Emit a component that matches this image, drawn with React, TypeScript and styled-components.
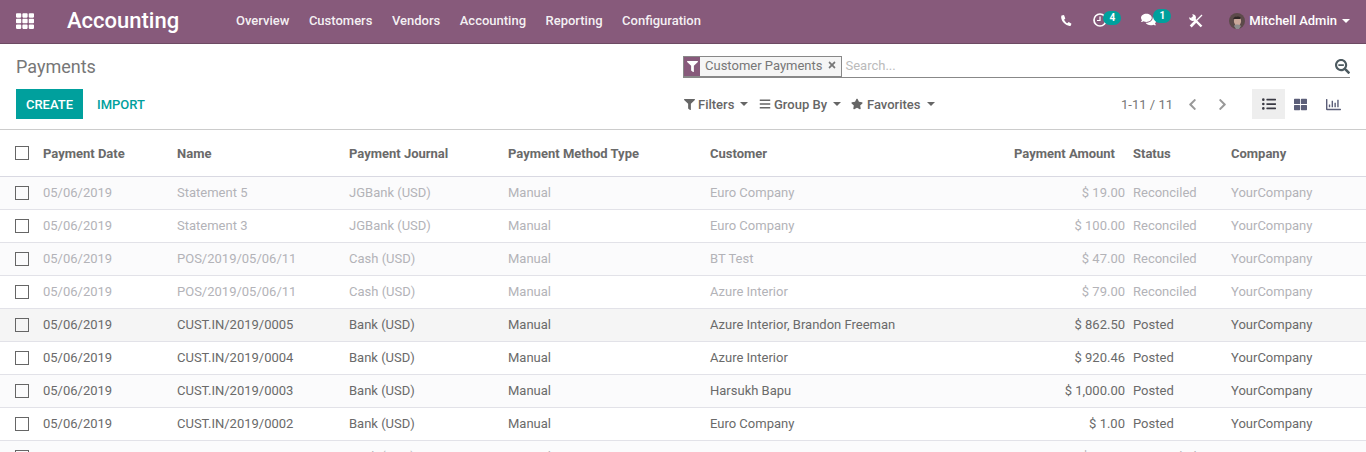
import React from 'react';
import styled, { createGlobalStyle } from 'styled-components';
import {
  FaBars,
  FaChevronLeft,
  FaChevronRight,
  FaComments,
  FaFilter,
  FaListUl,
  FaRegChartBar,
  FaSearchMinus,
  FaStar,
  FaThLarge,
  FaTimes,
  FaTh,
} from 'react-icons/fa';

const GlobalStyle = createGlobalStyle`
  html, body {
    margin: 0;
    height: 100%;
    overflow: hidden;
    background: #fff;
    font-family: Roboto, "Liberation Sans", sans-serif;
    font-size: 13px;
    color: #666;
  }
`;

const Page = styled.div`
  height: 452px;
  overflow: hidden;
`;

// Top navbar
const Navbar = styled.header`
  display: flex;
  align-items: center;
  height: 44px;
  box-sizing: border-box;
  padding-bottom: 2px;
  background: #875a7b;
  border-bottom: 1px solid #6d4a63;
  color: #fff;
`;

const AppsButton = styled.div`
  display: flex;
  width: 50px;
  padding-left: 16px;
  box-sizing: border-box;
  font-size: 18px;
`;

const Brand = styled.div`
  width: 186px;
  padding-left: 17px;
  box-sizing: border-box;
  font-size: 22px;
  font-weight: 500;
`;

const Menu = styled.nav`
  display: flex;
  gap: 19.5px;
  font-size: 13px;
  font-weight: 500;
  color: rgba(255, 255, 255, 0.93);
`;

const Systray = styled.div`
  display: flex;
  align-items: center;
  margin-left: auto;
  padding-right: 16px;
`;

const TrayItem = styled.div<{ $width: number }>`
  position: relative;
  display: flex;
  align-items: center;
  width: ${(p) => p.$width}px;
  font-size: 15px;
`;

const Badge = styled.span<{ $left: number; $top: number }>`
  position: absolute;
  top: ${(p) => p.$top}px;
  left: ${(p) => p.$left}px;
  width: 18px;
  height: 14px;
  line-height: 14px;
  border-radius: 7px;
  background: #00a09d;
  color: #fff;
  font-size: 10px;
  font-weight: 700;
  text-align: center;
`;

const TrayIcon = styled.svg<{ $lift?: number }>`
  display: block;
  width: 14px;
  height: 14px;
  margin-top: ${(p) => (p.$lift ? p.$lift * -1 : 0)}px;
`;

const ChatIcon = styled(FaComments)`
  margin-top: -2px;
`;

const UserName = styled.span`
  display: flex;
  align-items: center;
  font-size: 13px;
  font-weight: 500;
`;

const Avatar = styled.svg`
  width: 16px;
  height: 16px;
  margin-right: 4px;
`;

const Caret = styled.span<{ $gap: number }>`
  display: inline-block;
  width: 0;
  height: 0;
  margin-left: ${(p) => p.$gap}px;
  border-top: 4px solid currentColor;
  border-left: 4px solid transparent;
  border-right: 4px solid transparent;
`;

// Control panel
const ControlPanel = styled.section`
  display: grid;
  grid-template-columns: 667px 1fr;
  height: 85px;
  padding: 0 16px;
  border-bottom: 1px solid #ccc;
`;

const LeftPanel = styled.div`
  display: flex;
  flex-direction: column;
`;

const Title = styled.h1`
  margin: 12px 0 0;
  height: 33px;
  font-size: 18px;
  font-weight: 400;
  line-height: 22px;
  color: #777;
`;

const Buttons = styled.div`
  display: flex;
  align-items: center;
  gap: 4px;
`;

const CreateButton = styled.button`
  width: 67px;
  height: 30px;
  padding: 0;
  border: 0;
  background: #00a09d;
  color: #fff;
  font: 500 13px Roboto, sans-serif;
`;

const ImportButton = styled.button`
  width: 68px;
  height: 30px;
  padding: 0;
  border: 0;
  background: none;
  color: #00a09d;
  font: 500 13px Roboto, sans-serif;
`;

const RightPanel = styled.div`
  display: flex;
  flex-direction: column;
`;

const SearchBar = styled.div`
  display: flex;
  align-items: center;
  height: 23px;
  margin-top: 11px;
  box-sizing: border-box;
  border-bottom: 1px solid #888;
`;

const Facet = styled.div`
  display: flex;
  align-items: stretch;
  height: 21px;
  box-sizing: border-box;
  border: 1px solid #888;
  background: #f5f5f5;
`;

const FacetIcon = styled.span`
  display: flex;
  align-items: center;
  justify-content: center;
  width: 16px;
  background: #875a7b;
  color: #fff;
  font-size: 11px;
`;

const FacetLabel = styled.span`
  display: flex;
  align-items: center;
  gap: 4px;
  padding: 0 4px 2px 5px;
  color: #777;
  font-size: 13px;
`;

const Placeholder = styled.span`
  flex: 1;
  margin-left: 4px;
  padding-bottom: 2px;
  color: #bbb;
  font-size: 13px;
`;

const SearchIcon = styled(FaSearchMinus)`
  font-size: 15px;
  color: #4c5a60;
`;

const Tools = styled.div`
  display: flex;
  align-items: center;
  height: 30px;
  margin-top: 11px;
  padding-left: 1px;
`;

const Dropdown = styled.div<{ $width: number; $gap?: number }>`
  display: flex;
  align-items: center;
  width: ${(p) => p.$width}px;
  gap: ${(p) => p.$gap ?? 3}px;
  font-size: 13px;
  font-weight: 500;
  color: #666;
`;

const Pager = styled.div`
  display: flex;
  align-items: center;
  margin-left: auto;
  margin-right: -1px;
  color: #777;
  font-size: 13px;
`;

const PagerArrows = styled.div`
  display: flex;
  gap: 17px;
  margin: 0 23px 0 13px;
  color: #999;
  font-size: 13px;
`;

const SwitchButton = styled.div<{ $active?: boolean; $size: number; $nudge?: number }>`
  display: flex;
  align-items: center;
  justify-content: center;
  box-sizing: border-box;
  width: 33px;
  height: 30px;
  padding-right: ${(p) => p.$nudge ?? 0}px;
  font-size: ${(p) => p.$size}px;
  color: ${(p) => (p.$active ? '#3a3a44' : '#5b5e78')};
  background: ${(p) => (p.$active ? '#eeeeee' : 'transparent')};
`;

// Table
const Row = styled.div<{ $head?: boolean; $bg?: string; $faded?: boolean }>`
  position: relative;
  display: grid;
  grid-template-columns: 43px 134px 172px 159px 202px 200px 223px 98px 1fr;
  align-items: center;
  box-sizing: border-box;
  height: ${(p) => (p.$head ? '47px' : '33px')};
  border-bottom: 1px solid ${(p) => (p.$head ? '#d9d9e2' : '#e2e2e8')};
  background: ${(p) => p.$bg || '#fff'};
  box-shadow: ${(p) => (p.$head ? '0 3px 6px -2px rgba(0, 0, 0, 0.08)' : 'none')};
  color: ${(p) => (p.$faded ? '#b3b3b8' : '#6a6a6a')};
  font-weight: ${(p) => (p.$head ? 700 : 400)};
  font-size: 13px;

  & > span:not(:first-child) {
    padding-bottom: ${(p) => (p.$head ? 0 : 2)}px;
  }
`;

const Check = styled.span`
  display: block;
  width: 14px;
  height: 14px;
  box-sizing: border-box;
  margin-left: 15px;
  border: 1px solid #666;
`;

const Cell = styled.span`
  white-space: nowrap;
`;

const AmountCell = styled.span<{ $sortGap?: boolean }>`
  white-space: nowrap;
  text-align: right;
  padding-right: ${(p) => (p.$sortGap ? 18 : 8)}px;
`;

const rows = [
  ['05/06/2019', 'Statement 5', 'JGBank (USD)', 'Euro Company', '$ 19.00', 'Reconciled'],
  ['05/06/2019', 'Statement 3', 'JGBank (USD)', 'Euro Company', '$ 100.00', 'Reconciled'],
  ['05/06/2019', 'POS/2019/05/06/11', 'Cash (USD)', 'BT Test', '$ 47.00', 'Reconciled'],
  ['05/06/2019', 'POS/2019/05/06/11', 'Cash (USD)', 'Azure Interior', '$ 79.00', 'Reconciled'],
  ['05/06/2019', 'CUST.IN/2019/0005', 'Bank (USD)', 'Azure Interior, Brandon Freeman', '$ 862.50', 'Posted'],
  ['05/06/2019', 'CUST.IN/2019/0004', 'Bank (USD)', 'Azure Interior', '$ 920.46', 'Posted'],
  ['05/06/2019', 'CUST.IN/2019/0003', 'Bank (USD)', 'Harsukh Bapu', '$ 1,000.00', 'Posted'],
  ['05/06/2019', 'CUST.IN/2019/0002', 'Bank (USD)', 'Euro Company', '$ 1.00', 'Posted'],
  ['05/06/2019', 'CUST.IN/2019/0001', 'Bank (USD)', 'Euro Company', '$ 50.00', 'Reconciled'],
];

const rowBackground = (i: number) => {
  if (i === 4) return '#f5f5f5';
  return i % 2 === 0 ? '#fbfbfc' : '#fff';
};

const App: React.FC = () => (
  <Page>
    <GlobalStyle />
    <Navbar>
      <AppsButton>
        <FaTh />
      </AppsButton>
      <Brand>Accounting</Brand>
      <Menu>
        {['Overview', 'Customers', 'Vendors', 'Accounting', 'Reporting', 'Configuration'].map((m) => (
          <span key={m}>{m}</span>
        ))}
      </Menu>
      <Systray>
        <TrayItem $width={34}>
          <TrayIcon viewBox="0 0 14 14">
            <path d="M2.5 1.5c-1 1.5 0 5 2.2 7.3s5 3.6 7 2.9l.8-2-2.8-1.6-1.4 1.2c-1.4-.8-2.5-2-3.2-3.6l1.2-1.3L5 1z" fill="#fff" />
          </TrayIcon>
        </TrayItem>
        <TrayItem $width={48}>
          <TrayIcon viewBox="0 0 14 14" $lift={2}>
            <circle cx="7" cy="7" r="6" fill="none" stroke="#fff" strokeWidth="1.7" />
            <path d="M7 3.5V7.5H4" fill="none" stroke="#fff" strokeWidth="1.2" />
          </TrayIcon>
          <Badge $left={10} $top={-4}>4</Badge>
        </TrayItem>
        <TrayItem $width={48}>
          <ChatIcon />
          <Badge $left={12} $top={-5}>1</Badge>
        </TrayItem>
        <TrayItem $width={40}>
          <TrayIcon viewBox="0 0 14 14">
            <path d="M3 3l9.5 9.5" stroke="#fff" strokeWidth="2.4" />
            <path d="M3.2 0.2A3.4 3.4 0 1 1 .2 3.2l2.4 1 1.6-1.6z" fill="#fff" />
            <path d="M7.5 6.5l5.5-5.5" stroke="#fff" strokeWidth="1.3" />
            <path d="M7.5 6.5l-5.8 6" stroke="#fff" strokeWidth="2.6" />
          </TrayIcon>
        </TrayItem>
        <UserName>
          <Avatar viewBox="0 0 16 16">
            <circle cx="8" cy="8" r="8" fill="#5c4a4a" />
            <ellipse cx="8.5" cy="8" rx="3.6" ry="4.6" fill="#c9a79a" />
            <path d="M4 6c1-3 6-4 8-1l-1 1H6z" fill="#2f2626" />
            <path d="M5 13c1-2 5-2 7 0l-2 3H7z" fill="#8d8d8d" />
          </Avatar>
          Mitchell Admin
          <Caret $gap={5} />
        </UserName>
      </Systray>
    </Navbar>

    <ControlPanel>
      <LeftPanel>
        <Title>Payments</Title>
        <Buttons>
          <CreateButton>CREATE</CreateButton>
          <ImportButton>IMPORT</ImportButton>
        </Buttons>
      </LeftPanel>
      <RightPanel>
        <SearchBar>
          <Facet>
            <FacetIcon>
              <FaFilter />
            </FacetIcon>
            <FacetLabel>
              Customer Payments
              <FaTimes size={10} />
            </FacetLabel>
          </Facet>
          <Placeholder>Search...</Placeholder>
          <SearchIcon />
        </SearchBar>
        <Tools>
          <Dropdown $width={75}>
            <FaFilter size={11} /> Filters <Caret $gap={3} />
          </Dropdown>
          <Dropdown $width={92}>
            <FaBars size={12} /> Group By <Caret $gap={3} />
          </Dropdown>
          <Dropdown $width={90} $gap={4}>
            <FaStar size={12} /> Favorites <Caret $gap={3} />
          </Dropdown>
          <Pager>
            1-11 / 11
            <PagerArrows>
              <FaChevronLeft />
              <FaChevronRight />
            </PagerArrows>
            <SwitchButton $active $size={14}>
              <FaListUl />
            </SwitchButton>
            <SwitchButton $size={13} $nudge={2}>
              <FaThLarge />
            </SwitchButton>
            <SwitchButton $size={15} $nudge={3}>
              <FaRegChartBar />
            </SwitchButton>
          </Pager>
        </Tools>
      </RightPanel>
    </ControlPanel>

    <Row $head>
      <Check />
      <Cell>Payment Date</Cell>
      <Cell>Name</Cell>
      <Cell>Payment Journal</Cell>
      <Cell>Payment Method Type</Cell>
      <Cell>Customer</Cell>
      <AmountCell $sortGap>Payment Amount</AmountCell>
      <Cell>Status</Cell>
      <Cell>Company</Cell>
    </Row>
    {rows.map((r, i) => (
      <Row key={i} $bg={rowBackground(i)} $faded={r[5] === 'Reconciled'}>
        <Check />
        <Cell>{r[0]}</Cell>
        <Cell>{r[1]}</Cell>
        <Cell>{r[2]}</Cell>
        <Cell>Manual</Cell>
        <Cell>{r[3]}</Cell>
        <AmountCell>{r[4]}</AmountCell>
        <Cell>{r[5]}</Cell>
        <Cell>YourCompany</Cell>
      </Row>
    ))}
  </Page>
);

export default App;
